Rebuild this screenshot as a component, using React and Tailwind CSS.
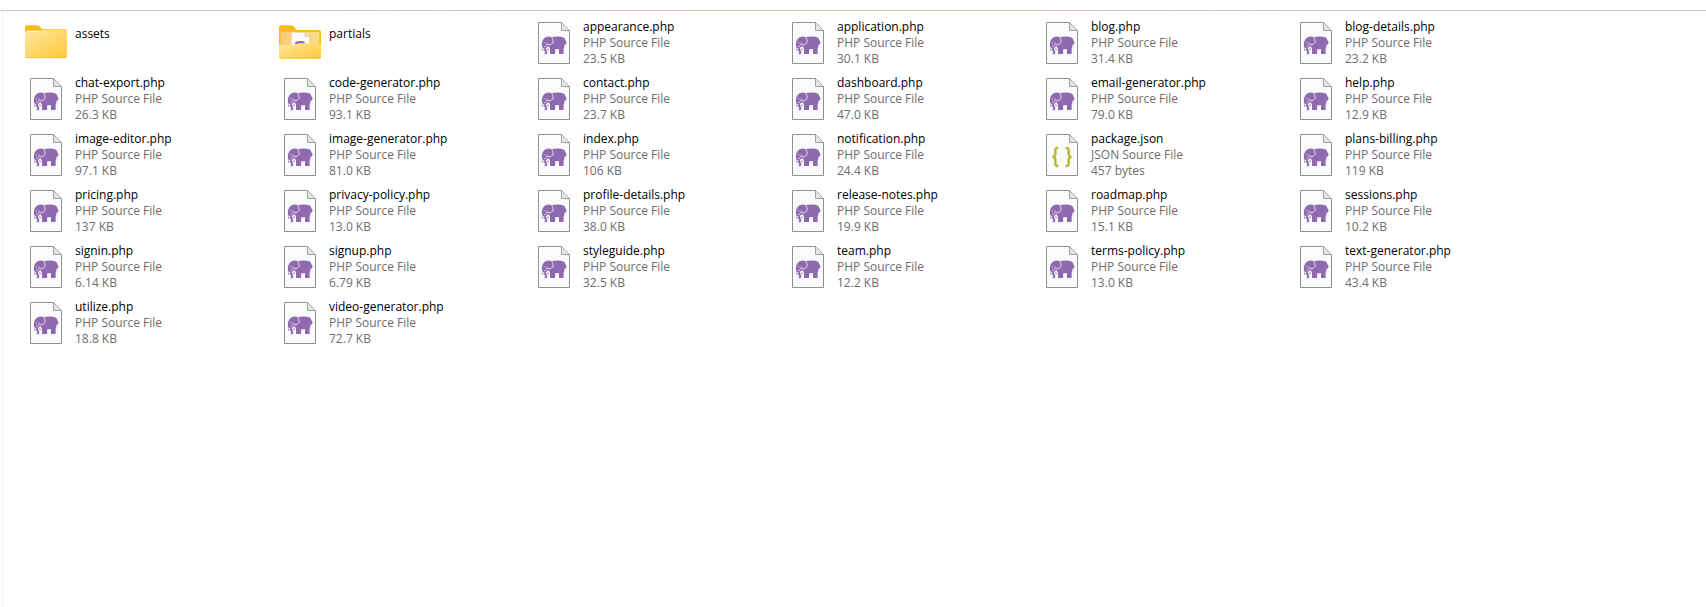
const files = [
  ['assets'],
  ['partials'],
  ['appearance.php', '23.5 KB'],
  ['application.php', '30.1 KB'],
  ['blog.php', '31.4 KB'],
  ['blog-details.php', '23.2 KB'],
  ['chat-export.php', '26.3 KB'],
  ['code-generator.php', '93.1 KB'],
  ['contact.php', '23.7 KB'],
  ['dashboard.php', '47.0 KB'],
  ['email-generator.php', '79.0 KB'],
  ['help.php', '12.9 KB'],
  ['image-editor.php', '97.1 KB'],
  ['image-generator.php', '81.0 KB'],
  ['index.php', '106 KB'],
  ['notification.php', '24.4 KB'],
  ['package.json', '457 bytes'],
  ['plans-billing.php', '119 KB'],
  ['pricing.php', '137 KB'],
  ['privacy-policy.php', '13.0 KB'],
  ['profile-details.php', '38.0 KB'],
  ['release-notes.php', '19.9 KB'],
  ['roadmap.php', '15.1 KB'],
  ['sessions.php', '10.2 KB'],
  ['signin.php', '6.14 KB'],
  ['signup.php', '6.79 KB'],
  ['styleguide.php', '32.5 KB'],
  ['team.php', '12.2 KB'],
  ['terms-policy.php', '13.0 KB'],
  ['text-generator.php', '43.4 KB'],
  ['utilize.php', '18.8 KB'],
  ['video-generator.php', '72.7 KB'],
];

function Elephant() {
  return (
    <g>
      <path
        fill="#9068b0"
        d="M14 56C16 49 22 44 30 44C34 43 38 44 42 46C50 43 60 44 67 44C76 44 81 48 82 55C86 58 86 64 83 69L80 66L79 75C77 78 77 81 77 96H63V81C60 83 56 83 52 81L51 96H36V81C35 79 34 76 33 73C29 73 25 75 24 79C23 83 27 86 28 90C29 94 26 97 21 97L18 94C22 94 23 92 21 89C17 86 18 82 19 78C15 80 12 77 12 71C11 66 12 60 14 56Z"
      />
      <path fill="none" stroke="#f8f9fb" strokeWidth="2.4" strokeLinecap="round" d="M42 47C47 53 47 62 41 66C36 70 29 68 26 64" />
      <path fill="none" stroke="#f8f9fb" strokeWidth="1.8" strokeLinecap="round" d="M19 74C23 73 26 70 27 66" />
      <circle cx="19" cy="62" r="1.6" fill="#f8f9fb" />
      <path fill="#9068b0" d="M27 79L33 82L30 86ZM12 79L17 83L13 87Z" />
    </g>
  );
}

function Page({ json }) {
  return (
    <svg viewBox="0 0 96 126" className="h-[42px] w-8" aria-hidden="true">
      <path d="M1.5 1.5H70.5L94.5 25.5V124.5H1.5Z" fill="#f9fbfc" stroke="#909090" strokeWidth="3" />
      <path d="M70.5 2V25.5H94" fill="#e3e5e6" stroke="#a0a0a0" strokeWidth="3" />
      {json ? (
        <g fill="none" stroke="#b9b933" strokeWidth="7.5">
          <path d="M37 42H34C29 42 28 45 28 49V60C28 65 26 68 20 69C26 70 28 73 28 78V88C28 93 29 96 34 96H37" />
          <path d="M59 42H62C67 42 68 45 68 49V60C68 65 70 68 76 69C70 70 68 73 68 78V88C68 93 67 96 62 96H59" />
        </g>
      ) : (
        <Elephant />
      )}
    </svg>
  );
}

function Folder({ open }) {
  return (
    <svg viewBox="0 0 126 102" className="mb-0.5 h-[34px] w-[42px]" aria-hidden="true">
      <defs>
        <linearGradient id="front" x1="0" y1="0" x2="1" y2="1">
          <stop offset="0" stopColor="#ffe7a0" />
          <stop offset="1" stopColor="#ffc937" />
        </linearGradient>
        <linearGradient id="inside" x1="0" y1="0" x2="1" y2="0">
          <stop offset="0" stopColor="#f4cd79" />
          <stop offset="1" stopColor="#fbdc83" />
        </linearGradient>
      </defs>
      {open ? (
        <>
          <path fill="#fbb91c" d="M0 6Q0 1 5 1H36Q40 1 43 4L54 15H121Q126 15 126 20V70H0Z" />
          <path fill="url(#inside)" d="M5 20H121V75H5Z" />
          <path fill="#f9fafb" d="M38 23H76L90 37V72H38Z" />
          <path fill="#d9dcde" d="M76 23V37H90Z" />
          <path fill="#9068b0" d="M48 58V54Q50 47 58 49Q72 46 77 51V58Z" />
          <path fill="url(#front)" d="M0 59H48Q52 59 55 56L57 55H126V96Q126 101 121 101H5Q0 101 0 96Z" />
          <path fill="none" stroke="#f0bb3c" strokeWidth="2" d="M2 98Q3 100 6 100H120Q124 100 125 96" />
        </>
      ) : (
        <>
          <path fill="#fbb91c" d="M0 6Q0 1 5 1H36Q40 1 43 4L52 13H121Q126 13 126 18V50H0Z" />
          <path fill="#fff8e5" d="M4 17H48L44 23H4Z" />
          <path fill="url(#front)" d="M0 21H40Q44 21 47 17L50 15H126V94Q126 99 121 99H5Q0 99 0 94Z" />
          <path fill="none" stroke="#f0bb3c" strokeWidth="2" d="M2 95Q3 98 6 98H120Q124 98 125 94" />
        </>
      )}
    </svg>
  );
}

function Item({ name, size }) {
  const json = name.endsWith('.json');
  return (
    <li className="flex h-12 gap-2">
      <span className="flex w-[42px] shrink-0 items-center justify-center">
        {size ? <Page json={json} /> : <Folder open={name === 'partials'} />}
      </span>
      {size ? (
        <div>
          <p className="text-black">{name}</p>
          <p>{json ? 'JSON Source File' : 'PHP Source File'}</p>
          <p>{size}</p>
        </div>
      ) : (
        <p className="pt-[7px] text-black">{name}</p>
      )}
    </li>
  );
}

export default function App() {
  return (
    <div className="flex min-h-screen flex-col bg-white pt-2.5 font-['Open_Sans','Noto_Sans',sans-serif] text-xs leading-4 text-[#6d6d6d]">
      <div className="h-px bg-[linear-gradient(to_right,#c8c8c8_20%,#dfc0b0_45%,#dfc0b0_58%,#c8c8c8_75%)]" />
      <main className="ml-0.5 grow border-l border-l-[#f3f3f3] pt-2 pl-[22px]">
        <ul className="grid grid-cols-[repeat(auto-fill,254px)] gap-y-2">
          {files.map(([name, size]) => (
            <Item key={name} name={name} size={size} />
          ))}
        </ul>
      </main>
    </div>
  );
}
